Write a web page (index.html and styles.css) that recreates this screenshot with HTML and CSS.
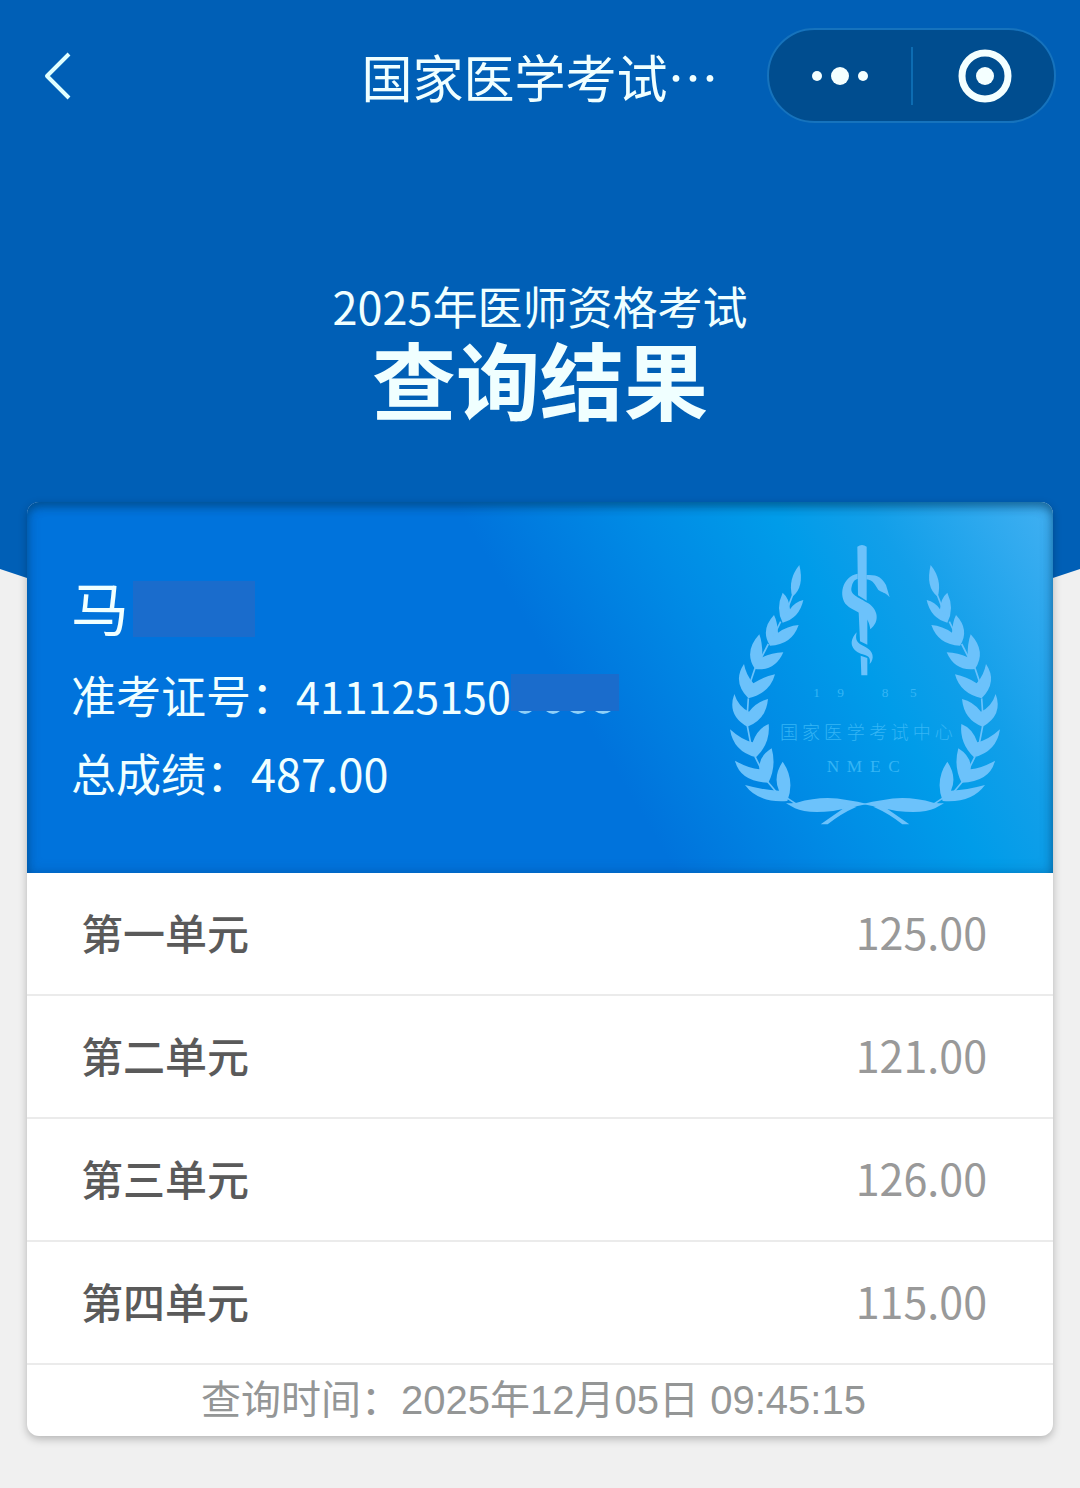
FILE: index.html
```html
<!DOCTYPE html>
<html lang="zh-CN">

<head>
    <meta charset="UTF-8">
    <meta name="viewport" content="width=device-width, initial-scale=1.0">
    <title>查询结果</title>
    <link rel="stylesheet" href="styles.css">
</head>

<body>
    <header class="hero">
        <nav class="nav">
            <a class="back" href="#" aria-label="返回">
                <svg width="30" height="50" viewBox="0 0 30 50">
                    <path d="M27 3L5 25L27 47" />
                </svg>
            </a>
            <div class="nav-title">国家医学考试…</div>
            <div class="capsule">
                <button type="button" aria-label="更多">
                    <svg width="60" height="24" viewBox="0 0 60 24">
                        <circle cx="7" cy="12" r="5" />
                        <circle cx="30" cy="12" r="9" />
                        <circle cx="53" cy="12" r="5" />
                    </svg>
                </button>
                <button type="button" aria-label="关闭">
                    <svg width="56" height="56" viewBox="0 0 56 56">
                        <circle class="ring" cx="30" cy="28" r="23" />
                        <circle cx="30" cy="28" r="9" />
                    </svg>
                </button>
            </div>
        </nav>
        <p class="exam">2025年医师资格考试</p>
        <h1>查询结果</h1>
    </header>

    <main class="card">
        <section class="summary">
            <div class="info">
                <p class="name">马<span class="mask-name"></span></p>
                <p class="line">准考证号：<span class="num">411125150</span><svg class="mask-num" width="108" height="42" viewBox="0 0 108 42">
                        <path class="digit" d="M7 37Q14 43 21 37zM35 37Q42 43 49 37zM59 37Q67 43 75 37zM84 37Q92 43 100 37z" />
                        <rect width="108" height="37" />
                    </svg></p>
                <p class="line">总成绩：487.00</p>
            </div>
            <!-- 考试中心徽标 -->
            <svg class="emblem" width="280" height="290" viewBox="75 180 840 870">
                <g id="branch">
                    <path d="M298 255Q262 300 277 350Q314 322 298 255Z" />
                    <path d="M248 338Q226 385 248 428Q298 415 310 360Q285 365 270 388Q268 355 248 338Z" />
                    <path d="M222 405Q180 450 210 497Q275 495 296 435Q262 438 234 458Q232 425 222 405Z" />
                    <path d="M178 463Q130 515 165 567Q225 575 250 517Q215 518 187 532Q188 490 178 463Z" />
                    <path d="M132 552Q96 605 145 655Q210 640 225 583Q190 590 160 610Q138 585 132 552Z" />
                    <path d="M103 642Q80 705 142 740Q198 720 204 657Q170 665 147 695Q115 680 103 642Z" />
                    <path d="M90 748Q100 815 168 832Q212 790 206 732Q172 745 158 787Q125 780 90 748Z" />
                    <path d="M105 842Q120 905 205 908Q230 860 215 805Q175 830 178 868Q145 865 105 842Z" />
                    <path d="M135 915Q175 970 262 963Q286 900 248 845Q218 890 237 932Q190 930 135 915Z" />
                    <path d="M258 970Q275 970 290 968Q370 945 440 960Q475 965 502 972Q440 985 400 993Q320 1002 285 985Z" />
                    <path d="M445 975L362 1033H383Q420 1002 470 980Z" />
                    <path class="stem" d="M278 345L255 405M242 425L220 470M205 492L178 545M165 565L150 610M145 655L142 700M142 738L152 790M165 830L185 870M203 905L232 940M255 950L300 980" />
                </g>
                <use href="#branch" transform="translate(990 0) scale(-1 1)" />
                <path d="M472 200Q486 190 500 200V362L474 346ZM476 396L502 406V494L480 484ZM482 527L502 534V586H484Z" />
                <path d="M473 281C425 290 415 350 440 375C465 400 505 395 511 448C540 425 535 390 505 370C475 350 448 345 455 320C458 305 465 298 473 297Z" />
                <path d="M470 457C440 490 460 515 488 523C508 528 512 535 509 552C525 535 520 512 495 500C470 490 465 480 470 457Z" />
                <path d="M499 285C530 283 545 290 558 315L569 352C555 336 545 338 535 330C525 315 520 300 499 298Z" />
                <g class="seal">
                    <text font-size="40" x="340 412 545 630" y="652">1985</text>
                    <text class="seal-cn" font-size="54" x="240 306 372 440 508 572 638 704" y="778">国家医学考试中心</text>
                    <text font-size="52" x="380 440 510 565" y="876">NMEC</text>
                </g>
            </svg>
        </section>
        <table>
            <tbody>
                <tr>
                    <th scope="row">第一单元</th>
                    <td>125.00</td>
                </tr>
                <tr>
                    <th scope="row">第二单元</th>
                    <td>121.00</td>
                </tr>
                <tr>
                    <th scope="row">第三单元</th>
                    <td>126.00</td>
                </tr>
                <tr>
                    <th scope="row">第四单元</th>
                    <td>115.00</td>
                </tr>
            </tbody>
        </table>
        <p class="time">查询时间：2025年12月05日 09:45:15</p>
    </main>
</body>

</html>
```

FILE: styles.css
```css
* {
    box-sizing: border-box;
    margin: 0;
    padding: 0;
}

body {
    background-color: #f0f0f0;
    font-family: "Noto Sans CJK SC", sans-serif;
    color: #f0ffff;
}

/* 顶部蓝色区域，底边两侧向上收 */
.hero {
    padding-bottom: 185px;
    background-color: #005fb6;
    clip-path: polygon(0 0, 100% 0, 100% calc(100% - 36px), 90% 100%, 10% 100%, 0 calc(100% - 36px));
    text-align: center;
}

.nav {
    display: grid;
    grid-template-columns: 1fr auto 1fr;
    align-items: center;
    padding: 28px 24px;
}

.back {
    justify-self: start;
    display: flex;
    padding-left: 18px;
}

.back path {
    fill: none;
    stroke: #e0ffff;
    stroke-width: 4;
    stroke-linejoin: round;
}

.nav-title {
    font-size: 51px;
    line-height: 72px;
}

.capsule {
    justify-self: end;
    display: flex;
    align-items: center;
    width: 289px;
    height: 95px;
    border: 2px solid #1673bd;
    border-radius: 48px;
    background-color: #004d8f;
}

.capsule button {
    flex: 1;
    display: flex;
    align-items: center;
    justify-content: center;
    height: 58px;
    border: 0;
    background: none;
}

.capsule button + button {
    border-left: 2px solid #0d6cb2;
}

.capsule svg {
    overflow: visible;
}

.capsule circle {
    fill: #f4ffff;
}

.capsule .ring {
    fill: none;
    stroke: #f4ffff;
    stroke-width: 7;
}

.exam {
    padding-top: 125px;
    font-size: 45px;
    line-height: 60px;
}

h1 {
    font-size: 84px;
    line-height: 84px;
}

.card {
    position: relative;
    margin: -103px 27px 51px;
    border-radius: 12px;
    background-color: #fff;
    box-shadow: 0 3px 8px rgba(0, 0, 0, .25);
}

.summary {
    display: flex;
    justify-content: space-between;
    padding: 38px 48px 43px 44px;
    border-radius: 12px 12px 0 0;
    background: linear-gradient(59deg, #0073dc 52%, #008be5 66%, #009ce9 77%, #129fe9 85%, #42b0f2 100%);
    box-shadow: inset 0 5px 8px rgba(0, 60, 100, .5), inset 0 0 14px rgba(0, 60, 120, .3);
}

.info {
    padding-top: 28px;
}

.name {
    display: flex;
    align-items: center;
    margin-bottom: 12px;
    font-size: 58px;
    line-height: 76px;
}

.line {
    display: flex;
    align-items: center;
    font-size: 45px;
    line-height: 78px;
}

.num {
    font-size: 43px;
}

.mask-name {
    width: 122px;
    height: 56px;
    margin: 6px 0 0 4px;
    background-color: #1a6ccc;
}

.mask-num rect {
    fill: #1a6ccc;
}

.mask-num .digit {
    fill: #8fd0f8;
}

.emblem {
    flex-shrink: 0;
    fill: #6cc2fb;
}

.emblem .stem {
    fill: none;
    stroke: #6cc2fb;
    stroke-width: 5;
}

.seal {
    fill: #35b5f5;
    font-family: "Liberation Serif", serif;
}

.seal-cn {
    font-family: "Noto Sans CJK SC", sans-serif;
    font-weight: 300;
}

table {
    width: 100%;
    border-spacing: 0;
}

th,
td {
    height: 123px;
    padding-bottom: 5px;
    border-bottom: 2px solid #ebebeb;
}

th {
    padding-left: 54px;
    font-size: 42px;
    font-weight: 500;
    text-align: left;
    color: #5a5a5a;
}

td {
    padding-right: 66px;
    font-size: 43px;
    text-align: right;
    color: #999;
}

.time {
    padding-right: 13px;
    font-family: "Liberation Sans", "Noto Sans CJK SC", sans-serif;
    font-size: 40px;
    line-height: 71px;
    text-align: center;
    color: #949696;
}
```
